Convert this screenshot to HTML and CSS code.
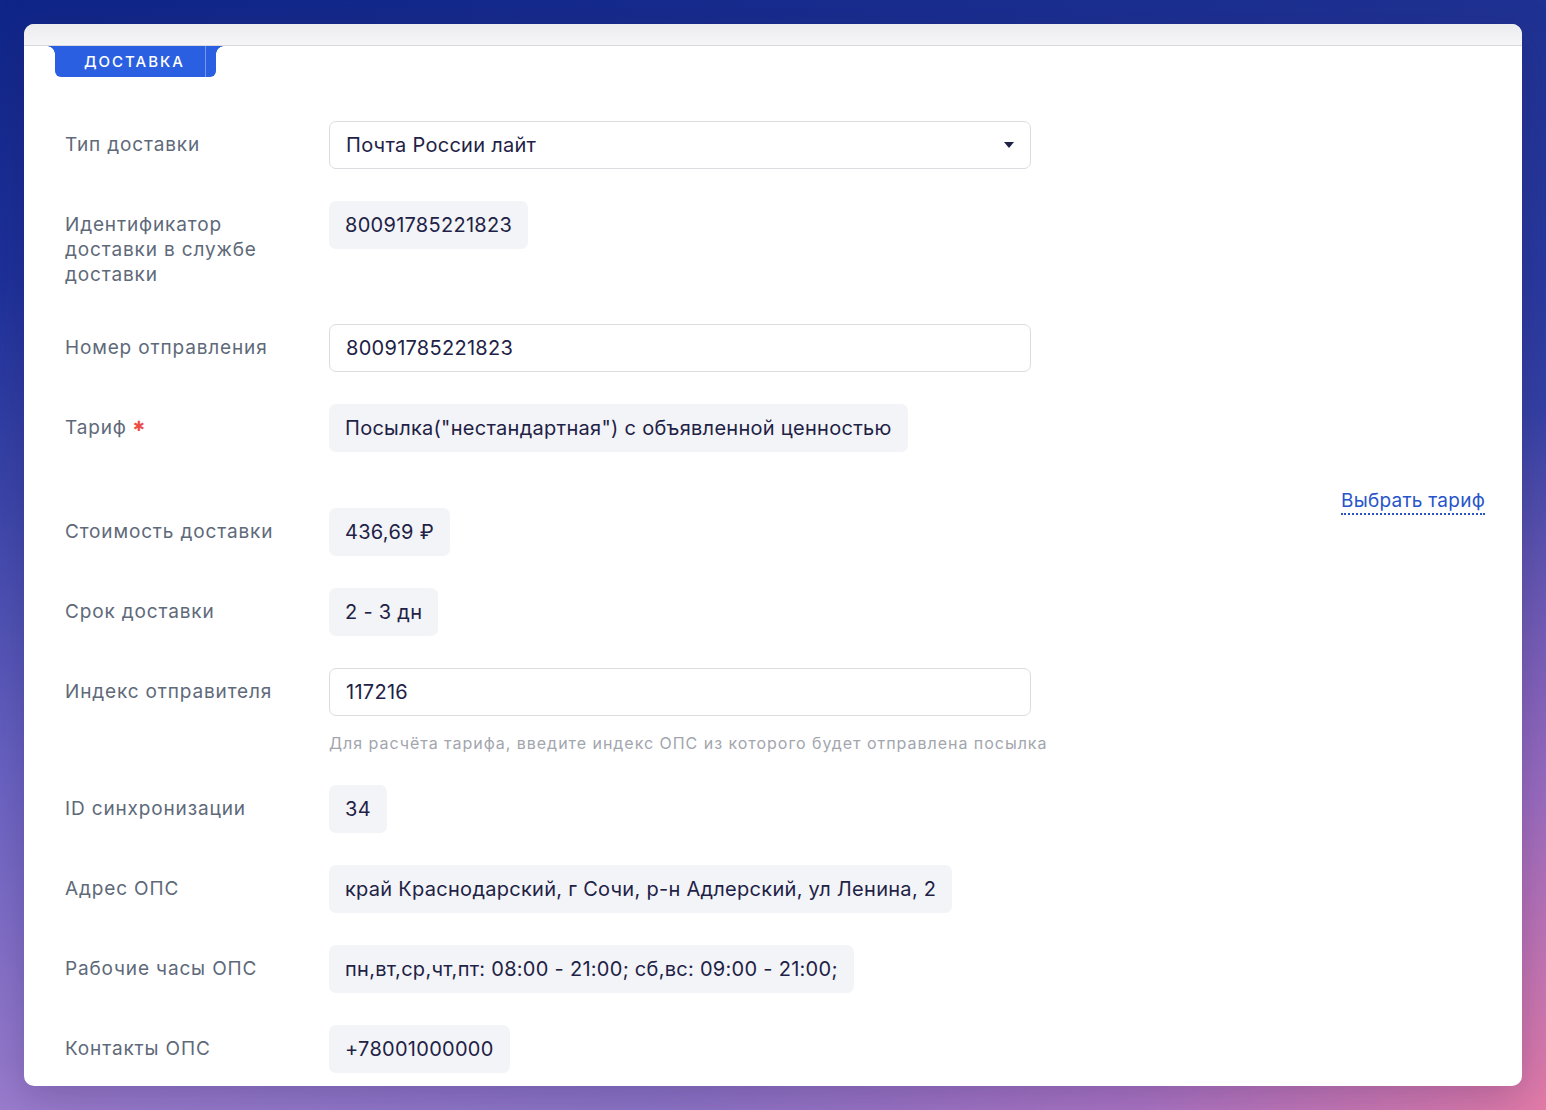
FILE: index.html
```html
<!DOCTYPE html>
<html lang="ru">
<head>
<meta charset="utf-8">
<title>Доставка</title>
<link rel="stylesheet" href="styles.css">
</head>
<body>
<div class="window">
  <div class="titlebar"></div>
  <div class="tabline">
    <div class="tab"><span class="tab-text">ДОСТАВКА</span><span class="tab-sep"></span></div>
  </div>
  <div class="form">
    <div class="row">
      <div class="label">Тип доставки</div>
      <div class="value">
        <div class="select">Почта России лайт<span class="caret"></span></div>
      </div>
    </div>
    <div class="row">
      <div class="label label-wrap">Идентификатор доставки в службе доставки</div>
      <div class="value"><span class="chip">80091785221823</span></div>
    </div>
    <div class="row">
      <div class="label">Номер отправления</div>
      <div class="value"><div class="input">80091785221823</div></div>
    </div>
    <div class="row">
      <div class="label">Тариф <span class="req">✱</span></div>
      <div class="value"><span class="chip">Посылка("нестандартная") с объявленной ценностью</span></div>
    </div>
    <div class="link-row"><a class="link">Выбрать тариф</a></div>
    <div class="row">
      <div class="label">Стоимость доставки</div>
      <div class="value"><span class="chip">436,69 ₽</span></div>
    </div>
    <div class="row">
      <div class="label">Срок доставки</div>
      <div class="value"><span class="chip">2 - 3 дн</span></div>
    </div>
    <div class="row">
      <div class="label">Индекс отправителя</div>
      <div class="value">
        <div class="input">117216</div>
        <div class="hint">Для расчёта тарифа, введите индекс ОПС из которого будет отправлена посылка</div>
      </div>
    </div>
    <div class="row">
      <div class="label">ID синхронизации</div>
      <div class="value"><span class="chip">34</span></div>
    </div>
    <div class="row">
      <div class="label">Адрес ОПС</div>
      <div class="value"><span class="chip">край Краснодарский, г Сочи, р-н Адлерский, ул Ленина, 2</span></div>
    </div>
    <div class="row">
      <div class="label">Рабочие часы ОПС</div>
      <div class="value"><span class="chip">пн,вт,ср,чт,пт: 08:00 - 21:00; сб,вс: 09:00 - 21:00;</span></div>
    </div>
    <div class="row">
      <div class="label">Контакты ОПС</div>
      <div class="value"><span class="chip">+78001000000</span></div>
    </div>
  </div>
</div>
</body>
</html>
```

FILE: styles.css
```css
* { box-sizing: border-box; }
html, body { margin: 0; padding: 0; }
body {
  width: 1546px;
  height: 1110px;
  overflow: hidden;
  font-family: Inter, "Noto Sans", sans-serif;
  background:
    radial-gradient(ellipse 900px 700px at 100% 100%, rgba(232,124,166,0.95) 0%, rgba(205,122,196,0.55) 45%, rgba(160,110,200,0) 100%),
    linear-gradient(90deg, rgba(60,72,168,0) 0%, rgba(60,72,168,0.35) 100%),
    linear-gradient(180deg, #0f2688 0%, #1d319a 25%, #3b46a9 45%, #6a63c2 70%, #9a7ccc 100%);
  padding: 24px;
}
.window {
  width: 1498px;
  height: 1062px;
  background: #fff;
  border-radius: 10px;
  overflow: hidden;
  box-shadow: 0 10px 40px rgba(40,20,80,0.25);
}
.titlebar {
  height: 22px;
  background: linear-gradient(180deg, #ececef 0%, #f6f6f7 100%);
  border-bottom: 1px solid #dadade;
}
.tabline {
  padding-left: 31px;
  height: 31px;
}
.tab {
  position: relative;
  width: 161px;
  height: 31px;
  background: #2b5fe1;
  border-radius: 0 0 6px 6px;
  display: flex;
  align-items: center;
}
.tab::before, .tab::after {
  content: "";
  position: absolute;
  top: 0;
  width: 8px;
  height: 8px;
}
.tab::before {
  left: -8px;
  background: radial-gradient(circle at 0 100%, transparent 7.5px, #2b5fe1 8px);
}
.tab::after {
  right: -8px;
  background: radial-gradient(circle at 100% 100%, transparent 7.5px, #2b5fe1 8px);
}
.tab-text {
  color: #fff;
  font-size: 15px;
  font-weight: 500;
  letter-spacing: 2px;
  margin-left: 29px;
}
.tab-sep {
  position: absolute;
  left: 150px;
  top: 0;
  bottom: 0;
  width: 1px;
  background: rgba(255,255,255,0.35);
}
.form {
  padding: 44px 37px 0 41px;
  display: flex;
  flex-direction: column;
}
.row {
  display: grid;
  grid-template-columns: 264px 1fr;
  margin-bottom: 32px;
}
.label {
  color: #5e6979;
  font-size: 19px;
  line-height: 25px;
  letter-spacing: 0.85px;
  padding: 11px 0 5px 0;
}
.label-wrap { padding-right: 36px; }
.req {
  color: #ec4f4a;
  font-family: "DejaVu Sans", sans-serif;
  font-size: 14px;
  font-weight: 700;
  position: relative;
  top: -3px;
}
.value {
  display: flex;
  flex-direction: column;
  align-items: flex-start;
}
.chip, .input, .select {
  height: 48px;
  display: inline-flex;
  align-items: center;
  padding: 0 16px;
  font-size: 20px;
  letter-spacing: 0.28px;
  color: #1e2246;
  border-radius: 7px;
}
.chip { background: #f3f4f7; }
.input, .select {
  width: 702px;
  border: 1px solid #dcdce0;
  background: #fff;
  padding-left: 16px;
}
.select { position: relative; }
.caret {
  position: absolute;
  right: 16px;
  top: 20px;
  width: 0;
  height: 0;
  border-left: 5px solid transparent;
  border-right: 5px solid transparent;
  border-top: 6px solid #1e2246;
}
.hint {
  margin-top: 17px;
  font-size: 16px;
  line-height: 20px;
  letter-spacing: 0.97px;
  color: #a2a6ad;
}
.link-row {
  display: flex;
  justify-content: flex-end;
  height: 24px;
  margin-top: 5px;
  margin-bottom: -5px;
}
.link {
  color: #2755c9;
  font-size: 19px;
  letter-spacing: 0.25px;
  line-height: 24px;
  height: 26px;
  border-bottom: 2px dotted #2755c9;
}
```
